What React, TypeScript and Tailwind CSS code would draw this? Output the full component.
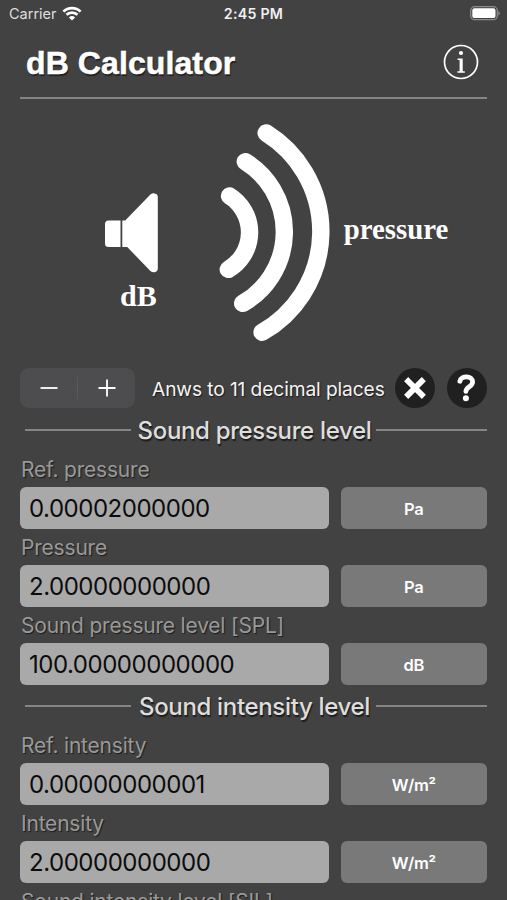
type Field = {
  label: string
  value: string
  unit: string
}

type Section = {
  title: string
  fields: Field[]
}

const sections: Section[] = [
  {
    title: 'Sound pressure level',
    fields: [
      { label: 'Ref. pressure', value: '0.00002000000', unit: 'Pa' },
      { label: 'Pressure', value: '2.00000000000', unit: 'Pa' },
      { label: 'Sound pressure level [SPL]', value: '100.00000000000', unit: 'dB' },
    ],
  },
  {
    title: 'Sound intensity level',
    fields: [
      { label: 'Ref. intensity', value: '0.00000000001', unit: 'W/m²' },
      { label: 'Intensity', value: '2.00000000000', unit: 'W/m²' },
      { label: 'Sound intensity level [SIL]', value: '', unit: '' },
    ],
  },
]

function StatusBar() {
  return (
    <div className="grid h-7 grid-cols-3 items-center pr-[7px] pl-[9px] text-white">
      <div className="flex items-center gap-[5px]">
        <span className="text-[14.5px] text-[#dedede]">Carrier</span>
        <svg className="-mt-0.5" width="20" height="15" viewBox="0 0 20 15" fill="none" stroke="white" strokeWidth="2.7">
          <path d="M1.4 5.6a12.2 12.2 0 0 1 17.2 0" />
          <path d="M4.5 8.8a7.8 7.8 0 0 1 11 0" />
          <path d="M10 14.6 6.9 11.4a4.5 4.5 0 0 1 6.2 0Z" fill="white" stroke="none" />
        </svg>
      </div>
      <span className="-ml-0.5 text-center text-[14.2px] font-semibold tracking-[0.25px] whitespace-nowrap text-[#f0f0f0]">
        2:45 PM
      </span>
      <svg className="-mt-0.5 justify-self-end" width="30" height="15" viewBox="0 0 30 15">
        <rect x="0.7" y="0.7" width="26.6" height="13" rx="4" fill="none" stroke="#8b8b8b" strokeWidth="1.3" />
        <rect x="2.3" y="2.3" width="23.2" height="9.8" rx="2.2" fill="white" />
        <path d="M28.3 5v4.6q1.5-.8 1.5-2.3T28.3 5Z" fill="#8b8b8b" />
      </svg>
    </div>
  )
}

function Header() {
  return (
    <header className="mx-5 flex h-[71px] items-center justify-between border-b-2 border-[#858585] pr-2 pl-[6px]">
      <h1 className="font-['Liberation_Sans',sans-serif] text-[32px] leading-none font-bold tracking-[0.1px] text-white [-webkit-text-stroke:0.5px_white] [text-shadow:1px_2px_1px_#222]">
        dB Calculator
      </h1>
      <button aria-label="Info" className="mb-0.5">
        <svg width="36" height="36" viewBox="0 0 36 36" fill="none">
          <circle cx="18" cy="18" r="16.5" stroke="white" strokeWidth="1.7" />
          <circle cx="18" cy="9" r="2.1" fill="white" />
          <path d="M14.6 14.4h5.1v12.8h2.1v1.6h-7.4v-1.6h2.2V16h-2Z" fill="white" />
        </svg>
      </button>
    </header>
  )
}

function SoundDiagram() {
  return (
    <svg className="block" width="507" height="269" viewBox="0 99 507 269" fill="white">
      <path d="M108.5 220.5h12V247h-12q-3.5 0-3.5-3.5V224q0-3.5 3.5-3.5Z" />
      <path d="M122.3 220.5h2.9L150.4 194.6q1.8-1.5 4.2-1.2 3.2.4 3.2 3.7v71.2q0 3.4-3.2 3.9-2.4.3-4.2-1.3L127.2 247h-4.9Z" />
      <g fill="none" stroke="white" strokeWidth="17.4" strokeLinecap="round">
        <path d="M229.6 196A43 43 0 0 1 228.3 269.4" />
        <path d="M245.3 161.6A82.5 82.5 0 0 1 242.7 303.4" />
        <path d="M266.2 133A116 116 0 0 1 262.1 332.3" />
      </g>
      <g fontFamily="'Liberation Serif', serif" fontWeight="bold">
        <text x="120" y="305.5" fontSize="30">dB</text>
        <text x="343.7" y="239" fontSize="28.8">pressure</text>
      </g>
    </svg>
  )
}

function Toolbar() {
  return (
    <div className="flex h-[41px] items-start px-5">
      <div className="flex h-10 w-[115px] items-center rounded-[9px] bg-[#4d4d4f]">
        <button aria-label="Fewer decimals" className="flex flex-1 justify-center">
          <svg width="18" height="18" viewBox="0 0 18 18" stroke="white" strokeWidth="1.8">
            <path d="M.5 9h17" />
          </svg>
        </button>
        <div className="h-[22px] w-px bg-[#5a5a5c]" />
        <button aria-label="More decimals" className="flex flex-1 justify-center">
          <svg width="18" height="18" viewBox="0 0 18 18" stroke="white" strokeWidth="1.8">
            <path d="M.5 9h17M9 .5v17" />
          </svg>
        </button>
      </div>
      <p className="ml-[17px] w-[243px] pt-px text-[19.2px] leading-10 tracking-[-0.11px] whitespace-nowrap text-[#f4f4f4] [text-shadow:1px_1px_1px_#1c1c1c]">
        Anws to 11 decimal places
      </p>
      <button aria-label="Clear">
        <svg width="40" height="40" viewBox="0 0 40 40">
          <circle cx="20" cy="20" r="20" fill="#202020" />
          <path
            d="m13.2 13.2 13.6 13.6M26.8 13.2 13.2 26.8"
            stroke="white"
            strokeWidth="5.8"
            strokeLinecap="square"
          />
        </svg>
      </button>
      <button aria-label="Help" className="ml-3">
        <svg width="40" height="40" viewBox="0 0 40 40" fill="none">
          <circle cx="20" cy="20" r="20" fill="#202020" />
          <path
            d="M12.9 13.2C14 7.4 25.6 7 25.6 14c0 4.9-6.7 4.4-6.7 9.4"
            stroke="white"
            strokeWidth="4.8"
            strokeLinecap="round"
          />
          <circle cx="18.9" cy="30.2" r="3" fill="white" />
        </svg>
      </button>
    </div>
  )
}

function SectionTitle({ title }: { title: string }) {
  return (
    <div className="mr-5 ml-[25px] flex h-[42px] items-center">
      <div className="h-0.5 w-[106px] bg-[#858585]" />
      <h2 className="w-[245px] pt-px pl-0.5 text-center text-[24px] font-medium tracking-[-0.34px] whitespace-nowrap text-[#dedede] [text-shadow:1px_2px_1px_#1c1c1c]">
        {title}
      </h2>
      <div className="h-0.5 flex-1 bg-[#858585]" />
    </div>
  )
}

function FieldRow({ label, value, unit }: Field) {
  return (
    <div className="px-5">
      <div className="flex h-9 items-center pt-0.5 pl-px text-[21px] tracking-[-0.2px] whitespace-nowrap text-[#999] [text-shadow:1px_1px_1px_#1c1c1c]">
        {label}
      </div>
      <div className="flex gap-3">
        <div className="flex h-[42px] w-[308.5px] items-center rounded-[6px] bg-[#a9a9a9] pt-0.5 pl-[9px] text-[24px] tracking-[-0.47px] text-[#0c0c0c]">
          {value}
        </div>
        <button className="h-[42px] flex-1 rounded-[6px] bg-[#797979] pt-0.5 text-[16.5px] font-semibold tracking-[-0.3px] text-white">
          {unit}
        </button>
      </div>
    </div>
  )
}

export default function App() {
  return (
    <main className="h-[900px] w-[507px] overflow-hidden bg-[#424242] font-['Inter',sans-serif]">
      <StatusBar />
      <Header />
      <SoundDiagram />
      <Toolbar />
      {sections.map((section) => (
        <section key={section.title}>
          <SectionTitle title={section.title} />
          {section.fields.map((field) => (
            <FieldRow key={field.label} {...field} />
          ))}
        </section>
      ))}
    </main>
  )
}
